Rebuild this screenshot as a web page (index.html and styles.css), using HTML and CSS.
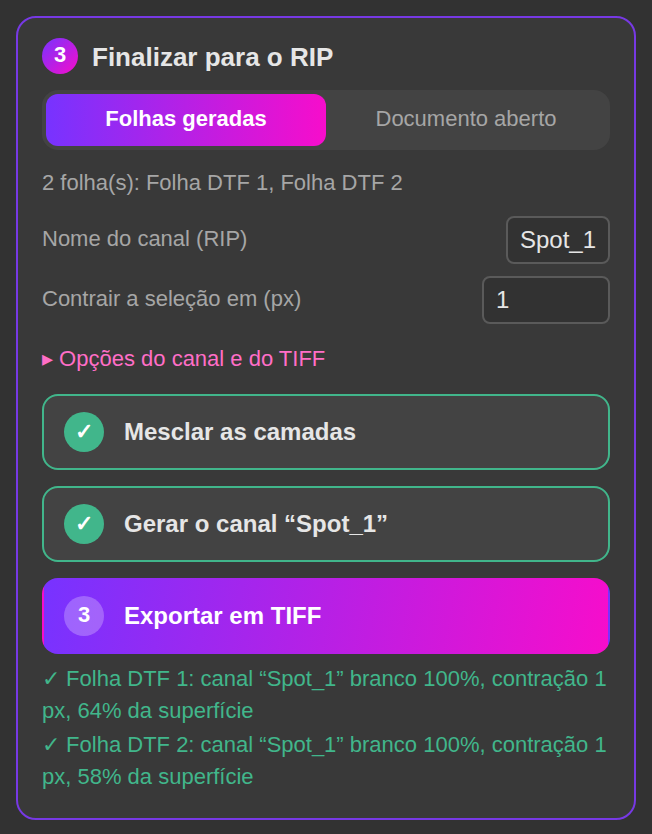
FILE: index.html
```html
<!DOCTYPE html>
<html lang="pt-BR">
<head>
<meta charset="utf-8">
<meta name="viewport" content="width=device-width, initial-scale=1">
<title>Finalizar para o RIP</title>
<link rel="stylesheet" href="styles.css">
</head>
<body>
<section class="card">
  <header class="card-head">
    <span class="card-number">3</span>
    <h2 class="card-title">Finalizar para o RIP</h2>
  </header>
  <div class="tabs">
    <button type="button" class="tab tab-active">Folhas geradas</button>
    <button type="button" class="tab">Documento aberto</button>
  </div>
  <p class="summary">2 folha(s): Folha DTF 1, Folha DTF 2</p>
  <div class="fields">
    <div class="field">
      <label for="channel">Nome do canal (RIP)</label>
      <input class="input input-name" id="channel" type="text" value="Spot_1">
    </div>
    <div class="field">
      <label for="shrink">Contrair a seleção em (px)</label>
      <input class="input input-number" id="shrink" type="text" inputmode="numeric" value="1">
    </div>
  </div>
  <button type="button" class="more" aria-expanded="false">▸ Opções do canal e do TIFF</button>
  <div class="steps">
    <button type="button" class="step step-done"><span class="badge">✓</span>Mesclar as camadas</button>
    <button type="button" class="step step-done"><span class="badge">✓</span>Gerar o canal “Spot_1”</button>
    <button type="button" class="step step-next"><span class="badge">3</span>Exportar em TIFF</button>
  </div>
  <div class="log">
    <p>✓ Folha DTF 1: canal “Spot_1” branco 100%, contração 1 px, 64% da superfície</p>
    <p>✓ Folha DTF 2: canal “Spot_1” branco 100%, contração 1 px, 58% da superfície</p>
  </div>
</section>
</body>
</html>
```
FILE: styles.css
```css
* {
  box-sizing: border-box;
}

body {
  margin: 0;
  padding: 16px;
  background: #323232;
  color: #a6a6a6;
  font-family: "Liberation Sans", Arial, sans-serif;
  font-size: 22px;
  line-height: 32px;
}

button,
input {
  margin: 0;
  font: inherit;
}

h2,
p {
  margin: 0;
}

.card {
  padding: 20px 24px 25px;
  border: 2px solid #7739e4;
  border-radius: 20px;
  background: #393939;
}

.card-head {
  display: flex;
  align-items: center;
  gap: 14px;
}

.card-number {
  width: 36px;
  height: 36px;
  border-radius: 50%;
  background: linear-gradient(135deg, #7733ff, #f70dcb);
  color: #fff;
  font-weight: bold;
  line-height: 34px;
  text-align: center;
}

.card-title {
  padding-top: 2px;
  color: #e6e6e6;
  font-size: 26px;
}

.tabs {
  display: grid;
  grid-template-columns: 1fr 1fr;
  margin-top: 16px;
  padding: 4px;
  border-radius: 16px;
  background: #434343;
}

.tab {
  height: 52px;
  padding: 0 0 2px;
  border: 0;
  border-radius: 12px;
  background: none;
  color: #a6a6a6;
}

.tab-active {
  background: linear-gradient(90deg, #7733ff, #f70dcb);
  color: #fff;
  font-weight: bold;
}

.summary {
  margin-top: 17px;
}

.fields {
  display: grid;
  gap: 12px;
  margin-top: 17px;
}

.field {
  display: flex;
  align-items: center;
  justify-content: space-between;
}

.field label {
  padding-bottom: 2px;
}

.input {
  height: 48px;
  padding: 0 12px;
  border: 2px solid #5a5a5a;
  border-radius: 8px;
  background: #323232;
  color: #e6e6e6;
  font-size: 24px;
}

.input-name {
  width: 104px;
}

.input-number {
  width: 128px;
}

.more {
  display: block;
  margin-top: 19px;
  padding: 0;
  border: 0;
  background: none;
  color: #ff6ec7;
}

.steps {
  display: grid;
  gap: 16px;
  margin-top: 19px;
}

.step {
  display: flex;
  align-items: center;
  gap: 20px;
  height: 76px;
  padding: 0 20px;
  border: 2px solid transparent;
  border-radius: 16px;
  font-size: 24px;
  font-weight: bold;
  text-align: left;
}

.step-done {
  border-color: #41b68b;
  background: #434343;
  color: #e6e6e6;
}

.step-next {
  background: linear-gradient(100deg, #7733ff, #f70dcb);
  color: #fff;
}

.badge {
  width: 40px;
  height: 40px;
  border-radius: 50%;
  background: #41b68b;
  color: #fff;
  font-size: 22px;
  line-height: 40px;
  text-align: center;
}

.step-next .badge {
  background: rgba(255, 255, 255, 0.25);
  line-height: 38px;
}

.log {
  display: grid;
  gap: 2px;
  margin-top: 9px;
  color: #41b68b;
}
```
